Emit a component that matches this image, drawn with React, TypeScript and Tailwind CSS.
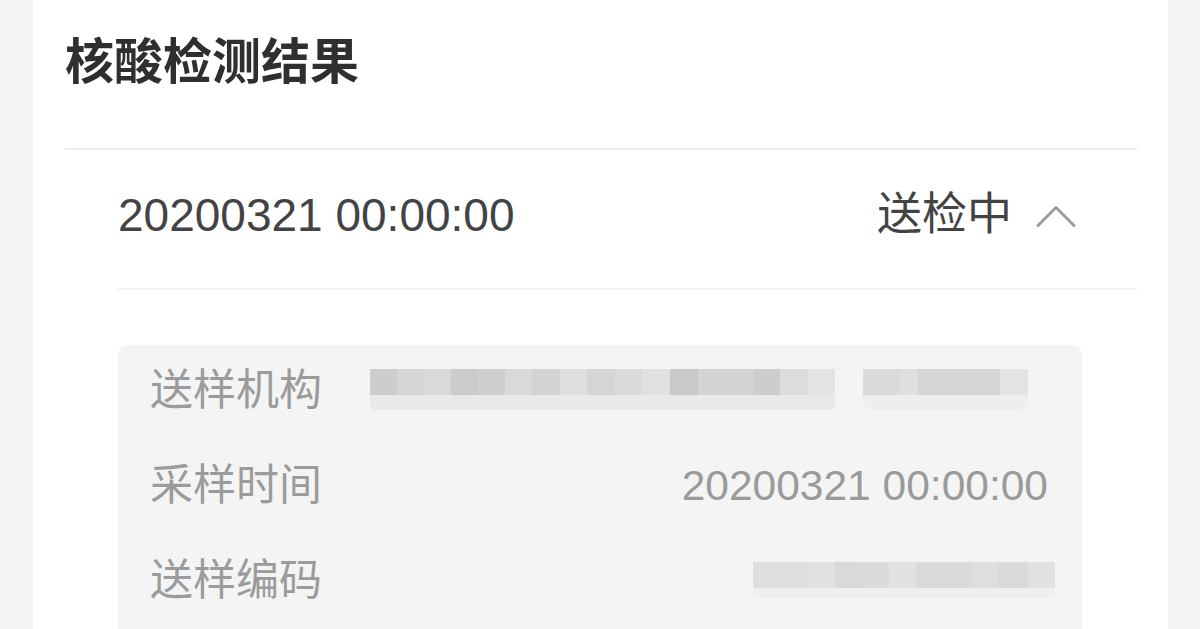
import React from 'react';

type Block = [number, string];

// 送样机构 value is masked in the screenshot, drawn as a mosaic strip
const orgTop: Block[] = [
  [27, '#cdcdcd'], [27, '#d5d5d5'], [27, '#d9d9d9'], [27, '#cbcbcb'], [27, '#cfcfcf'],
  [27, '#d9d9d9'], [28, '#d3d3d3'], [27, '#dfdfdf'], [28, '#d5d5d5'], [27, '#dbdbdb'],
  [28, '#e0e0e0'], [28, '#c9c9c9'], [55, '#d4d4d4'], [27, '#cdcdcd'], [28, '#dcdcdc'],
  [27, '#e3e3e3'], [28, 'transparent'], [37, '#dadada'], [18, '#dfdfdf'], [82, '#d5d5d5'],
  [28, '#e4e4e4'],
];

const codeTop: Block[] = [
  [55, '#dedede'], [27, '#e1e1e1'], [27, '#d9d9d9'], [27, '#dbdbdb'], [27, '#e2e2e2'],
  [55, '#dadada'], [27, '#dedede'], [30, '#dadada'], [27, '#e1e1e1'],
];

const Mosaic: React.FC<{ blocks: Block[]; height: number }> = ({ blocks, height }) => (
  <div className="flex">
    {blocks.map(([w, c], i) => (
      <div key={i} style={{ width: w, height, backgroundColor: c }} />
    ))}
  </div>
);

const ChevronUp: React.FC = () => (
  <svg width="42" height="24" viewBox="0 0 42 24" fill="none" className="ml-[23px] mt-[2px]">
    <polyline
      points="3,21.5 21,3.5 39,21.5"
      stroke="#9c9c9c"
      strokeWidth="3"
      strokeLinecap="round"
      strokeLinejoin="round"
    />
  </svg>
);

const App: React.FC = () => {
  return (
    <div
      className="w-[1200px] h-[629px] overflow-hidden bg-[#f4f4f4] pl-[33px] pr-[32px] flex"
      style={{ fontFamily: '"Liberation Sans", "Noto Sans CJK SC", sans-serif' }}
    >
      <div className="flex-1 bg-white pl-[32px] pr-[31px]">
        {/* 标题 */}
        <div className="pt-[27px] pb-[51px] border-b-2 border-[#ededed]">
          <h1 className="text-[49px] leading-[70px] font-bold text-[#2f2f2f]">
            核酸检测结果
          </h1>
        </div>

        <div className="ml-[53px]">
          {/* 检测记录 */}
          <div className="h-[140px] flex items-center justify-between pb-[8px] pr-[60px] border-b-2 border-[#f3f3f3]">
            <span className="text-[46px] text-[#434343]">20200321 00:00:00</span>
            <div className="flex items-center">
              <span className="text-[45px] text-[#434343]">送检中</span>
              <ChevronUp />
            </div>
          </div>

          {/* 详情 */}
          <div className="mt-[55px] mr-[55px] bg-[#f4f4f4] rounded-[10px] pl-[32px] pr-[34px] pb-[30px]">
            <div className="h-[95px] flex items-center pb-[4px]">
              <span className="w-[172px] text-[43px] text-[#9b9b9b]">送样机构</span>
              <div className="ml-[48px] mt-[-2px] flex flex-col">
                <Mosaic blocks={orgTop} height={26} />
                <div className="flex">
                  <div className="w-[465px] h-[15px] bg-[#e9e9e9] rounded-b-[6px]" />
                  <div className="ml-[28px] w-[165px] h-[15px] bg-[#eeeeee] rounded-b-[10px]" />
                </div>
              </div>
            </div>

            <div className="h-[95px] flex items-center justify-between pb-[4px]">
              <span className="text-[43px] text-[#9b9b9b]">采样时间</span>
              <span className="text-[42.5px] text-[#9a9a9a]">20200321 00:00:00</span>
            </div>

            <div className="h-[95px] flex items-center justify-between pb-[4px]">
              <span className="text-[43px] text-[#9b9b9b]">送样编码</span>
              <div className="mt-[-1px] mr-[-7px] flex flex-col">
                <Mosaic blocks={codeTop} height={26} />
                <div className="w-[302px] h-[10px] bg-[#efefef]" />
              </div>
            </div>
          </div>
        </div>
      </div>
    </div>
  );
};

export default App;
